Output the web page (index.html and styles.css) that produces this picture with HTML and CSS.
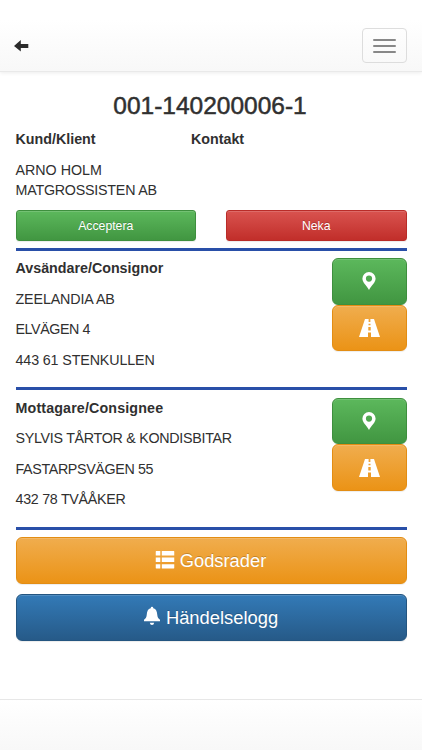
FILE: index.html
```html
<!DOCTYPE html>
<html lang="sv">
<head>
<meta charset="utf-8">
<meta name="viewport" content="width=device-width, initial-scale=1">
<title>001-140200006-1</title>
<link rel="stylesheet" href="styles.css">
</head>
<body>
<header class="navbar">
  <a class="back" aria-label="Tillbaka"><svg width="15" height="12" viewBox="0 0 15 12"><path d="M0 6 6.8 0v3.9H14.3V8H6.8v3.6z"/></svg></a>
  <button class="toggle" aria-label="Meny"><span></span><span></span><span></span></button>
</header>
<main>
  <h1>001-140200006-1</h1>
  <section class="client">
    <div><h2>Kund/Klient</h2><p>ARNO HOLM<br><span class="company">MATGROSSISTEN AB</span></p></div>
    <div><h2>Kontakt</h2></div>
  </section>
  <div class="decisions">
    <button class="btn small green">Acceptera</button>
    <button class="btn small red">Neka</button>
  </div>
  <section class="party">
    <div class="address"><h2>Avsändare/Consignor</h2><p class="snug">ZEELANDIA AB</p><p class="tightest">ELVÄGEN 4</p><p class="snug">443 61 STENKULLEN</p></div>
    <div class="actions">
      <button class="btn large green" aria-label="Karta"><svg class="pin" viewBox="0 0 14 18"><path fill-rule="evenodd" d="M7 0a6.600 6.600 0 0 1 6.600 6.600C13.600 10.500 9.500 13.500 7 18 4.500 13.500.4 10.500.4 6.600A6.600 6.600 0 0 1 7 0zm0 3.500a3.100 3.100 0 1 0 0 6.200 3.100 3.100 0 0 0 0-6.200z"/></svg></button>
      <button class="btn large orange" aria-label="Vägbeskrivning"><svg class="road" viewBox="0 0 21 18"><path fill-rule="evenodd" d="M6 0H9.600V3H11.400V0H15L21 18H12V13.500H9V18H0zM9.500 4.700V6.300H11.500V4.700zM9.300 8V11.500H11.700V8z"/></svg></button>
    </div>
  </section>
  <section class="party">
    <div class="address"><h2 class="wide">Mottagare/Consignee</h2><p class="tight">SYLVIS TÅRTOR &amp; KONDISBITAR</p><p class="tighter">FASTARPSVÄGEN 55</p><p class="tight">432 78 TVÅÅKER</p></div>
    <div class="actions">
      <button class="btn large green" aria-label="Karta"><svg class="pin" viewBox="0 0 14 18"><path fill-rule="evenodd" d="M7 0a6.600 6.600 0 0 1 6.600 6.600C13.600 10.500 9.500 13.500 7 18 4.500 13.500.4 10.500.4 6.600A6.600 6.600 0 0 1 7 0zm0 3.500a3.100 3.100 0 1 0 0 6.200 3.100 3.100 0 0 0 0-6.200z"/></svg></button>
      <button class="btn large orange" aria-label="Vägbeskrivning"><svg class="road" viewBox="0 0 21 18"><path fill-rule="evenodd" d="M6 0H9.600V3H11.400V0H15L21 18H12V13.500H9V18H0zM9.500 4.700V6.300H11.500V4.700zM9.300 8V11.500H11.700V8z"/></svg></button>
    </div>
  </section>
  <div class="links">
    <button class="btn large orange"><svg class="list" viewBox="0 0 19 18"><path d="M.8 0H4.800V4.400H0V.8Q0 0 .8 0zM6.300 0H18.200Q19 0 19 .8V4.400H6.300zM0 6.600H4.800V11H0zM6.300 6.600H19V11H6.300zM0 13.200H4.800V17.600H.8Q0 17.600 0 16.800zM6.300 13.200H19V16.800Q19 17.600 18.200 17.600H6.300z"/></svg><span>Godsrader</span></button>
    <button class="btn large blue"><svg class="bell" viewBox="0 0 16 19"><path d="M8 0Q9.300 0 9.300 1.800C12.200 2.500 13 5 13.300 8.500 13.500 11 14.200 11.800 16 13.300V14.800H0V13.300C1.800 11.800 2.500 11 2.700 8.500 3 5 3.800 2.500 6.700 1.800Q6.700 0 8 0zM5.800 16.300H10.200Q9.800 18.500 8 18.500T5.800 16.300z"/></svg><span>Händelselogg</span></button>
  </div>
</main>
<footer></footer>
</body>
</html>
```
FILE: styles.css
```css
* { box-sizing: border-box; }
body {
  margin: 0;
  height: 750px;
  display: flex;
  flex-direction: column;
  overflow: hidden;
  background: #fff;
  color: #303030;
  font: 14.27px/20.4px "Liberation Sans", Arial, sans-serif;
}
.navbar {
  flex: none;
  height: 72px;
  padding: 20px 15.500px 0 14px;
  display: flex;
  align-items: center;
  justify-content: space-between;
  background: linear-gradient(#fff 20px, #f8f8f8);
  border-bottom: 1px solid #e9e9e9;
  box-shadow: 0 1px 4px rgba(0, 0, 0, .08);
}
.back { display: flex; fill: #2b2b2b; }
.toggle {
  width: 45px;
  height: 35px;
  padding: 0 10px;
  display: flex;
  flex-direction: column;
  justify-content: center;
  gap: 4px;
  border: 1px solid #ddd;
  border-radius: 4px;
  background: transparent;
}
.toggle span { height: 2px; border-radius: 1px; background: #888; }
main { flex: 1; padding: 0 15.500px; }
h1 {
  margin: 20px 0 10px -2px;
  font-size: 24.500px;
  line-height: 27px;
  font-weight: 400;
  text-align: center;
  -webkit-text-stroke: .5px #303030;
}
h2 { margin: 0 0 10.200px; font-size: 14.270px; line-height: 20.400px; font-weight: 700; }
p { margin: 0 0 10.200px; }
.wide { letter-spacing: .14px; }
.snug { letter-spacing: -.12px; }
.company { letter-spacing: -.22px; }
.tight { letter-spacing: -.28px; }
.tighter { letter-spacing: -.35px; }
.tightest { letter-spacing: -.42px; }
.client { display: grid; grid-template-columns: 175.500px 1fr; height: 81px; }
.decisions { display: grid; grid-template-columns: 1fr 1fr; gap: 30px; height: 37.500px; }
.btn {
  display: flex;
  align-items: center;
  justify-content: center;
  padding: 0;
  border: 1px solid;
  color: #fff;
  font-family: inherit;
  text-shadow: 0 -1px 0 rgba(0, 0, 0, .2);
  box-shadow: inset 0 1px 0 rgba(255, 255, 255, .15), 0 1px 1px rgba(0, 0, 0, .075);
}
.btn svg { fill: #fff; }
.small { height: 31px; border-radius: 3px; font-size: 12.250px; }
.large { width: 100%; height: 47px; border-radius: 6px; font-size: 18.350px; }
.green { background: linear-gradient(#5cb85c, #419641); border-color: #3e8f3e; }
.red { background: linear-gradient(#d9534f, #c12e2a); border-color: #b92c28; }
.orange { background: linear-gradient(#f0ad4e, #eb9316); border-color: #e38d13; }
.blue { background: linear-gradient(#337ab7, #265a88); border-color: #245580; }
.party {
  display: flex;
  justify-content: space-between;
  height: 139.500px;
  padding-top: 7.600px;
  border-top: 3px solid #294fa8;
}
.address { white-space: nowrap; }
.actions { width: 75px; }
.actions .large { height: 46.700px; }
.pin { width: 14px; height: 18px; }
.road { width: 21px; height: 18px; }
.links { display: grid; gap: 10px; padding-top: 7px; border-top: 3px solid #294fa8; }
.links .large { padding-top: 2px; }
.list { width: 19px; height: 18px; margin-right: 5px; transform: translate(-.5px, -1px); }
.bell { width: 16px; height: 19px; margin-right: 6px; transform: translateY(-2.500px); }
footer { flex: none; height: 51px; border-top: 1px solid #e7e7e7; background: linear-gradient(#fff, #f8f8f8); }
```
